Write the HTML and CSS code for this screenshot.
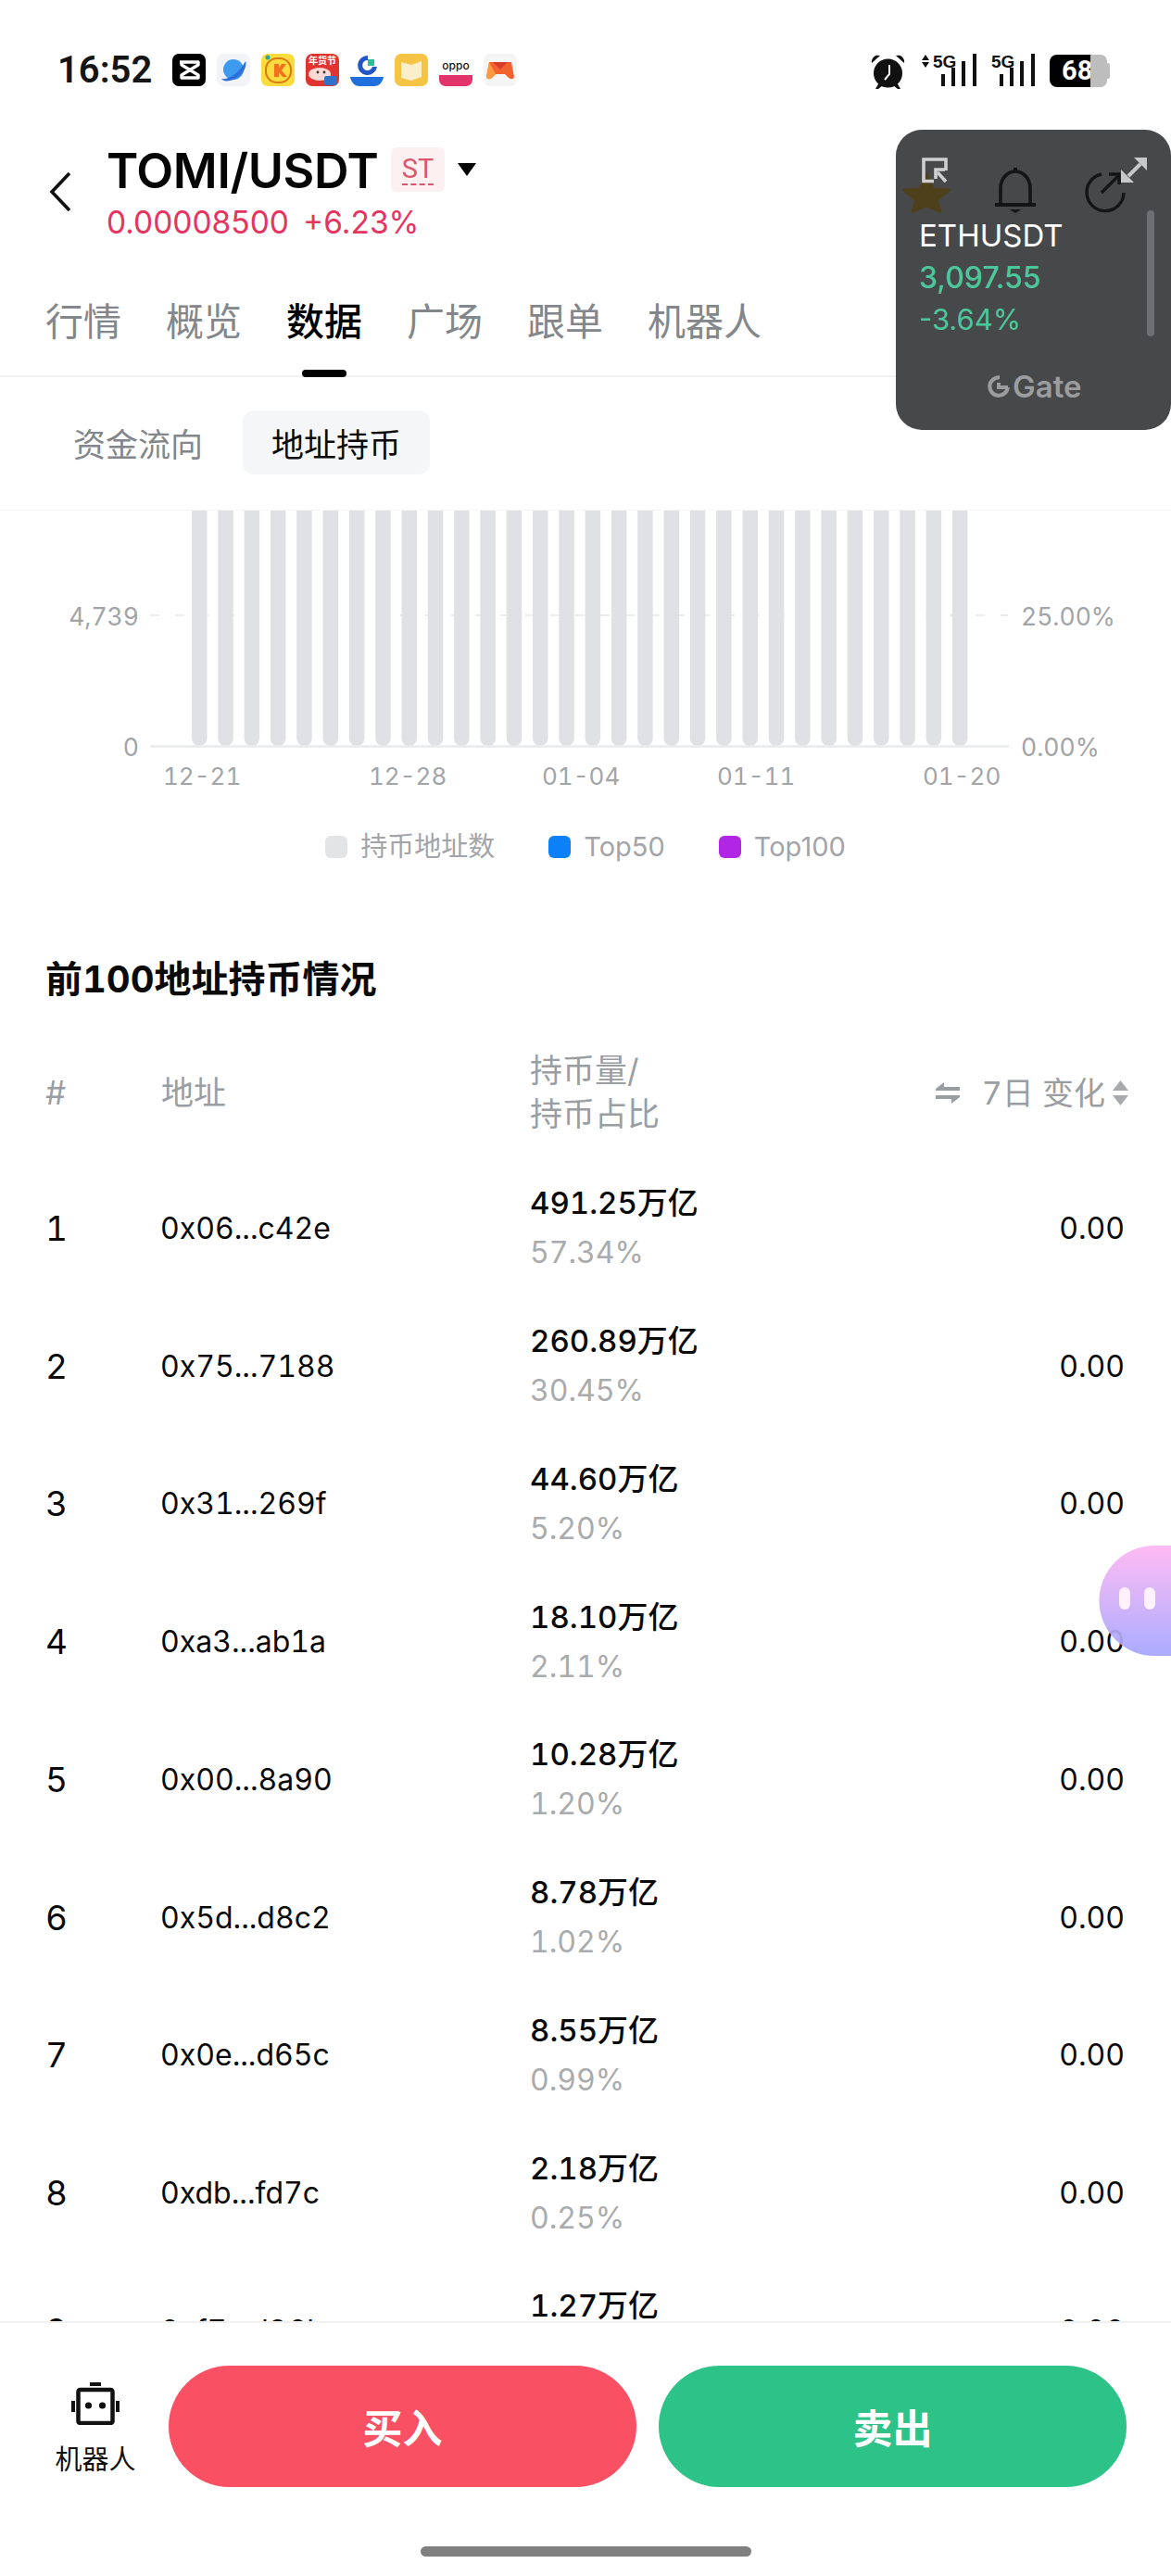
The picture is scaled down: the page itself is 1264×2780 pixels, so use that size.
FILE: index.html
```html
<!DOCTYPE html>
<html lang="zh-CN">
<head>
<meta charset="utf-8">
<title>TOMI/USDT</title>
<link rel="stylesheet" href="styles.css">
</head>
<body>
<div class="app">
  <div class="status">
    <span class="time">16:52</span>
    <div class="apps">
      <svg class="app-ic" viewBox="0 0 36 35"><rect width="36" height="35" rx="7" fill="#000"/><path d="M8 9 L28 9 L28 12 L10 23 L10 26 L28 26 L28 23 L10 12 L10 9" fill="none" stroke="#fff" stroke-width="3.4" stroke-linejoin="round"/></svg>
      <svg class="app-ic" viewBox="0 0 36 35"><rect width="36" height="35" rx="7" fill="#f2f4f7"/><circle cx="18" cy="17" r="11" fill="#3d9bf0"/><path d="M5 27 C12 29 25 20 31 8 C33 14 28 24 18 28 C12 30 7 30 5 27Z" fill="#2f6fdc"/></svg>
      <svg class="app-ic" viewBox="0 0 36 35"><rect width="36" height="35" rx="7" fill="#fbdc3e"/><rect x="5" y="5" width="27" height="26" rx="12" fill="none" stroke="#d97b12" stroke-width="2"/><path d="M14 11 V25 H19 V20 L23 25 H28 L22 18 L27 11 H22 L19 15 V11Z" fill="#f0731c"/><circle cx="7" cy="4" r="2.500" fill="#2aa89a"/></svg>
      <svg class="app-ic" viewBox="0 0 36 35"><rect width="36" height="35" rx="7" fill="#e1332f"/><text class="ic-txt" x="18" y="11" font-size="10" fill="#fff" text-anchor="middle">年货节</text><ellipse cx="15" cy="22" rx="12" ry="7" fill="#fbd9d4"/><circle cx="13" cy="20" r="1.4" fill="#333"/><circle cx="20" cy="20" r="1.4" fill="#333"/><rect x="20" y="24" width="14" height="10" rx="2" fill="#2f73c9"/></svg>
      <svg class="app-ic" viewBox="0 0 36 35"><path d="M19 2 A10.500 10.500 0 1 0 29 14 L24 14 A5.500 5.500 0 1 1 19 7Z" fill="#2355c7"/><rect x="19" y="6" width="7" height="7" fill="#27c29a"/><path d="M0 25 H36 C35 31 31 35 26 35 H10 C5 35 1 31 0 25Z" fill="#1f6fdc"/></svg>
      <svg class="app-ic" viewBox="0 0 36 35"><rect width="36" height="35" rx="7" fill="#f6c445"/><path d="M7 9 L18 12 L29 8 V25 L18 29 L7 26Z" fill="#fbeecb"/></svg>
      <svg class="app-ic" viewBox="0 0 36 35"><text class="ic-lat" x="18" y="17" font-size="12" fill="#111" text-anchor="middle">oppo</text><path d="M0 23 H36 V28 A7 7 0 0 1 29 35 H7 A7 7 0 0 1 0 28Z" fill="#e2336b"/></svg>
      <svg class="app-ic" viewBox="0 0 36 35"><rect width="36" height="35" rx="7" fill="#f5f5f6"/><path d="M6 9 H30 L33 25 Q32 29 27 26 L23 22 H13 L9 26 Q4 29 3 25Z" fill="#f2622e"/><path d="M10 9 L18 17 L26 9Z" fill="#d93c2a"/><path d="M3 25 L6 9 L13 22 L9 26 Q4 29 3 25Z" fill="#fb9a3f"/></svg>
    </div>
    <div class="sys">
      <svg class="sys-alarm" viewBox="0 0 38 38"><circle cx="18.500" cy="21" r="15.500" fill="#111"/><path d="M1 10 A7 7 0 0 1 10 2 Z M36 10 A7 7 0 0 0 27 2 Z" fill="#111"/><path d="M5 38 L9 31 L13 34 L8 38Z M32 38 L28 31 L24 34 L29 38Z" fill="#111"/><path d="M20 12 V22 L15 28" fill="none" stroke="#fff" stroke-width="2"/></svg>
      <svg class="sys-sig1" viewBox="0 0 60 36"><path d="M5 1 L9 7 H1Z M5 15 L9 9 H1Z" fill="#111"/><text class="sig-txt" x="13" y="15" font-size="19">5G</text><rect x="22" y="22" width="4" height="13" fill="#111"/><rect x="33" y="15" width="4" height="20" fill="#111"/><rect x="44" y="8" width="4" height="27" fill="#111"/><rect x="56" y="0" width="4" height="35" fill="#111"/></svg>
      <svg class="sys-sig2" viewBox="0 0 47 36"><text class="sig-txt" x="0" y="15" font-size="19">5G</text><rect x="9" y="22" width="4" height="13" fill="#111"/><rect x="20" y="15" width="4" height="20" fill="#111"/><rect x="31" y="8" width="4" height="27" fill="#111"/><rect x="43" y="0" width="4" height="35" fill="#111"/></svg>
      <div class="battery"><span class="batt-fill">68</span><span class="batt-rest"></span></div>
    </div>
  </div>

  <header class="head">
    <svg class="back" viewBox="0 0 24 44"><path d="M22 2 L3 22 L22 42" fill="none" stroke="#111" stroke-width="3.6"/></svg>
    <div class="pair">
      <div class="pair-top">
        <span class="pair-name">TOMI/USDT</span>
        <span class="badge"><span class="badge-t">ST</span></span>
        <span class="caret"></span>
      </div>
      <div class="pair-price"><span>0.00008500</span><span>+6.23%</span></div>
    </div>
  </header>

  <nav class="tabs">
    <a class="tab">行情</a>
    <a class="tab">概览</a>
    <a class="tab tab-on">数据</a>
    <a class="tab">广场</a>
    <a class="tab">跟单</a>
    <a class="tab">机器人</a>
  </nav>

  <div class="subtabs">
    <a class="sub">资金流向</a>
    <a class="sub sub-on">地址持币</a>
  </div>

  <main class="main">
    <svg class="chart" viewBox="0 0 1264 300" width="1264" height="300">
      <line x1="162" y1="113" x2="1088" y2="113" class="grid"/>
      <rect x="207" y="-20" width="16.5" height="274" rx="8" class="bar"/>
      <rect x="235.3" y="-20" width="16.5" height="274" rx="8" class="bar"/>
      <rect x="263.6" y="-20" width="16.5" height="274" rx="8" class="bar"/>
      <rect x="291.9" y="-20" width="16.5" height="274" rx="8" class="bar"/>
      <rect x="320.2" y="-20" width="16.5" height="274" rx="8" class="bar"/>
      <rect x="348.5" y="-20" width="16.5" height="274" rx="8" class="bar"/>
      <rect x="376.9" y="-20" width="16.5" height="274" rx="8" class="bar"/>
      <rect x="405.2" y="-20" width="16.5" height="274" rx="8" class="bar"/>
      <rect x="433.5" y="-20" width="16.5" height="274" rx="8" class="bar"/>
      <rect x="461.8" y="-20" width="16.5" height="274" rx="8" class="bar"/>
      <rect x="490.1" y="-20" width="16.5" height="274" rx="8" class="bar"/>
      <rect x="518.4" y="-20" width="16.5" height="274" rx="8" class="bar"/>
      <rect x="546.7" y="-20" width="16.5" height="274" rx="8" class="bar"/>
      <rect x="575" y="-20" width="16.5" height="274" rx="8" class="bar"/>
      <rect x="603.3" y="-20" width="16.5" height="274" rx="8" class="bar"/>
      <rect x="631.6" y="-20" width="16.5" height="274" rx="8" class="bar"/>
      <rect x="659.9" y="-20" width="16.5" height="274" rx="8" class="bar"/>
      <rect x="688.2" y="-20" width="16.5" height="274" rx="8" class="bar"/>
      <rect x="716.5" y="-20" width="16.5" height="274" rx="8" class="bar"/>
      <rect x="744.8" y="-20" width="16.5" height="274" rx="8" class="bar"/>
      <rect x="773.1" y="-20" width="16.5" height="274" rx="8" class="bar"/>
      <rect x="801.5" y="-20" width="16.5" height="274" rx="8" class="bar"/>
      <rect x="829.8" y="-20" width="16.5" height="274" rx="8" class="bar"/>
      <rect x="858.1" y="-20" width="16.5" height="274" rx="8" class="bar"/>
      <rect x="886.4" y="-20" width="16.5" height="274" rx="8" class="bar"/>
      <rect x="914.7" y="-20" width="16.5" height="274" rx="8" class="bar"/>
      <rect x="943" y="-20" width="16.5" height="274" rx="8" class="bar"/>
      <rect x="971.3" y="-20" width="16.5" height="274" rx="8" class="bar"/>
      <rect x="999.6" y="-20" width="16.5" height="274" rx="8" class="bar"/>
      <rect x="1027.9" y="-20" width="16.5" height="274" rx="8" class="bar"/>
      <line x1="162" y1="254.5" x2="1089" y2="254.5" class="axis"/>
      <text class="lbl" x="150" y="124" text-anchor="end">4,739</text>
      <text class="lbl" x="150" y="265" text-anchor="end">0</text>
      <text class="lbl" x="1102" y="124">25.00%</text>
      <text class="lbl" x="1102" y="265">0.00%</text>
      <text class="lbl lbl-d" x="176" y="296">12-21</text>
      <text class="lbl lbl-d" x="398" y="296">12-28</text>
      <text class="lbl lbl-d" x="585" y="296">01-04</text>
      <text class="lbl lbl-d" x="774" y="296">01-11</text>
      <text class="lbl lbl-d" x="996" y="296">01-20</text>
    </svg>

    <div class="legend">
      <div class="leg"><i class="sw sw-g"></i>持币地址数</div>
      <div class="leg"><i class="sw sw-b"></i>Top50</div>
      <div class="leg"><i class="sw sw-p"></i>Top100</div>
    </div>

    <h2 class="title">前100地址持币情况</h2>

    <div class="thead">
      <span>#</span>
      <span>地址</span>
      <span class="th-qty">持币量/<br>持币占比</span>
      <span class="th-chg">
        <svg class="swap" viewBox="0 0 26 23"><path d="M0 7 L9 0 V5 H26 V9 H0Z M26 16 L17 23 V18 H0 V14 H26Z" fill="#9a9da1"/></svg>
        <span class="th-txt">7日 变化</span>
        <svg class="sort" viewBox="0 0 17 27"><path d="M8.5 0 L17 11 H0Z" fill="#a8aaad"/><path d="M8.5 27 L0 16 H17Z" fill="#a8aaad"/></svg>
      </span>
    </div>

    <div class="row"><span class="num">1</span><span class="addr">0x06...c42e</span><div class="qty"><b>491.25万亿</b><span>57.34%</span></div><span class="chg">0.00</span></div>
    <div class="row"><span class="num">2</span><span class="addr">0x75...7188</span><div class="qty"><b>260.89万亿</b><span>30.45%</span></div><span class="chg">0.00</span></div>
    <div class="row"><span class="num">3</span><span class="addr">0x31...269f</span><div class="qty"><b>44.60万亿</b><span>5.20%</span></div><span class="chg">0.00</span></div>
    <div class="row"><span class="num">4</span><span class="addr">0xa3...ab1a</span><div class="qty"><b>18.10万亿</b><span>2.11%</span></div><span class="chg">0.00</span></div>
    <div class="row"><span class="num">5</span><span class="addr">0x00...8a90</span><div class="qty"><b>10.28万亿</b><span>1.20%</span></div><span class="chg">0.00</span></div>
    <div class="row"><span class="num">6</span><span class="addr">0x5d...d8c2</span><div class="qty"><b>8.78万亿</b><span>1.02%</span></div><span class="chg">0.00</span></div>
    <div class="row"><span class="num">7</span><span class="addr">0x0e...d65c</span><div class="qty"><b>8.55万亿</b><span>0.99%</span></div><span class="chg">0.00</span></div>
    <div class="row"><span class="num">8</span><span class="addr">0xdb...fd7c</span><div class="qty"><b>2.18万亿</b><span>0.25%</span></div><span class="chg">0.00</span></div>
    <div class="row"><span class="num">9</span><span class="addr">0xf7...d36b</span><div class="qty"><b>1.27万亿</b><span>0.15%</span></div><span class="chg">0.00</span></div>
  </main>

  <footer class="foot">
    <div class="foot-row">
      <div class="bot">
        <svg class="bot-ic" viewBox="0 0 52 46"><rect x="20" y="0" width="12" height="4" fill="#111"/><rect x="7.5" y="8" width="37" height="36" rx="2" fill="none" stroke="#111" stroke-width="4.5"/><rect x="0" y="20" width="4" height="12" fill="#111"/><rect x="48" y="20" width="4" height="12" fill="#111"/><circle cx="18.5" cy="25" r="3.6" fill="#111"/><circle cx="33.5" cy="25" r="3.6" fill="#111"/></svg>
        <span class="bot-txt">机器人</span>
      </div>
      <a class="btn btn-buy">买入</a>
      <a class="btn btn-sell">卖出</a>
    </div>
    <div class="home"></div>
  </footer>

  <aside class="float">
    <svg class="float-ic" viewBox="0 0 297 324" width="297" height="324">
      <path d="M33 48 L40 64 L57 65 L44 76 L48 88 L33 82 L18 88 L22 76 L9 65 L26 64Z" fill="#4e401a" stroke="#4e401a" stroke-width="3" stroke-linejoin="round"/>
      <path d="M41 55.500 H30 V32 H54 V44" fill="none" stroke="#cfcfcf" stroke-width="3.600"/>
      <path d="M54 56 L45 46" stroke="#cfcfcf" stroke-width="3.600"/>
      <path d="M43 53 V43 H53" fill="none" stroke="#cfcfcf" stroke-width="3.600"/>
      <path d="M129 41 V46" stroke="#141516" stroke-width="4"/>
      <path d="M113 81 V63 A16 18 0 0 1 145 63 V81" fill="none" stroke="#141516" stroke-width="3.600"/>
      <path d="M107 81 H151" stroke="#141516" stroke-width="4"/>
      <path d="M123 86 H135 L129 90Z" fill="#141516"/>
      <path d="M222 48 A20 20 0 1 0 246 68" fill="none" stroke="#141516" stroke-width="3.400"/>
      <path d="M222 68 L240 50" stroke="#141516" stroke-width="3.400"/>
      <path d="M230 48 H241 V59" fill="none" stroke="#141516" stroke-width="3.400"/>
      <path d="M251 50 L264 37" stroke="#c8c8c8" stroke-width="4"/>
      <path d="M257 30 H271 V44Z" fill="#c8c8c8"/>
      <path d="M243 43 V57 H257Z" fill="#c8c8c8"/>
    </svg>
    <div class="f-name">ETHUSDT</div>
    <div class="f-price">3,097.55</div>
    <div class="f-pct">-3.64%</div>
    <div class="f-logo">
      <svg class="g-ic" viewBox="0 0 24 24"><path d="M13 2.500 A9.700 9.700 0 1 0 21.700 13" fill="none" stroke="#9b9c9e" stroke-width="4.200"/><path d="M10 8 H14 V11 H22 V15 H10Z" fill="#9b9c9e"/></svg>
      <span>Gate</span>
    </div>
    <span class="f-scroll"></span>
  </aside>

  <svg class="bubble" viewBox="0 0 78 119" width="78" height="119">
    <defs><linearGradient id="bub" x1="0" y1="0" x2="0" y2="1"><stop offset="0" stop-color="#ffb6f3"/><stop offset="1" stop-color="#a4a6ff"/></linearGradient></defs>
    <path d="M78 0 H60 A59.500 59.500 0 0 0 60 119 H78Z" fill="url(#bub)"/>
    <rect x="22" y="45" width="12" height="24" rx="6" fill="#fff0fd"/>
    <rect x="49" y="45" width="12" height="24" rx="6" fill="#fff0fd"/>
  </svg>
</div>
</body>
</html>
```

FILE: styles.css
```css
* { box-sizing: border-box; }
html, body { margin: 0; padding: 0; background: #fff; }
body { font-family: Inter, "Noto Sans CJK SC", sans-serif; color: #000; }
a { display: block; }
svg { display: block; flex: none; }

.app { position: relative; width: 1264px; height: 2780px; overflow: hidden; display: flex; flex-direction: column; background: #fff; }

/* status bar */
.status { height: 153px; flex: none; display: flex; align-items: flex-start; padding: 58px 66px 0 62px; }
.time { font: 600 40px/35px Roboto, sans-serif; color: #151515; width: 99px; }
.apps { display: flex; gap: 12px; margin-left: 25px; }
.app-ic { width: 36px; height: 35px; }
.ic-txt { font-family: "Noto Sans CJK SC", sans-serif; font-weight: 700; }
.ic-lat { font-family: Inter, sans-serif; font-weight: 500; }
.sig-txt { font-family: "Liberation Sans", sans-serif; font-weight: 700; fill: #111; }
.sys { margin-left: auto; display: flex; gap: 16px; align-items: flex-start; }
.sys-alarm { width: 38px; height: 38px; }
.sys-sig1 { width: 60px; height: 36px; }
.sys-sig2 { width: 47px; height: 36px; }
.battery { position: relative; width: 65px; height: 35px; display: flex; margin-top: 1px; }
.batt-fill { width: 44px; background: #000; color: #fff; border-radius: 8px 0 0 8px; font: 700 29px/35px Roboto, sans-serif; padding-left: 13px; white-space: nowrap; }
.batt-rest { width: 18px; background: #bdbdbd; border-radius: 0 7px 7px 0; }
.battery::after { content: ""; position: absolute; right: 0; top: 9px; width: 3px; height: 17px; border-radius: 0 2px 2px 0; background: #bdbdbd; }

/* header */
.head { flex: none; display: flex; align-items: center; height: 107px; padding-left: 53px; gap: 38px; }
.back { width: 24px; height: 44px; }
.pair { display: flex; flex-direction: column; }
.pair-top { display: flex; align-items: center; height: 64px; }
.pair-name { font-weight: 600; font-size: 52px; line-height: 64px; color: #050505; width: 307px; white-space: nowrap; letter-spacing: -.4px; }
.badge { width: 58px; height: 48px; background: #fdf0f0; border-radius: 6px; display: flex; justify-content: center; align-items: center; margin-top: -4px; }
.badge-t { font: 400 29px/31px Roboto, sans-serif; color: #d9566e; border-bottom: 2px dashed #d9566e; }
.caret { width: 0; height: 0; border-left: 10px solid transparent; border-right: 10px solid transparent; border-top: 14px solid #000; margin-left: 14px; margin-top: -4px; }
.pair-price { display: flex; gap: 15px; margin-top: 3px; font-size: 33.5px; line-height: 40px; color: #e5345f; white-space: nowrap; }

/* tabs */
.tabs { flex: none; height: 147px; display: flex; gap: 48px; padding: 60px 0 0 49px; border-bottom: 2px solid #f1f1f2; }
.tab { position: relative; font-size: 41px; line-height: 48px; color: #83878b; font-family: "Noto Sans CJK SC", sans-serif; height: 85px; }
.tab-on { color: #000; font-weight: 500; }
.tab-on::after { content: ""; position: absolute; left: 17px; bottom: -2px; width: 48px; height: 8px; border-radius: 4px; background: #000; }

.subtabs { flex: none; height: 144px; display: flex; gap: 12px; padding: 36px 0 0 48px; border-bottom: 1px solid #f6f6f6; }
.sub { height: 69px; width: 202px; text-align: center; border-radius: 12px; font: 400 35px/69px "Noto Sans CJK SC", sans-serif; color: #83878b; }
.sub-on { background: #f5f6f7; color: #0a0a0a; }

/* main */
.main { flex: 1; min-height: 0; overflow: hidden; }
.chart { width: 1264px; height: 300px; overflow: hidden; }
.bar { fill: #dfe1e4; }
.grid { stroke: #ececee; stroke-width: 2; stroke-dasharray: 10 17; }
.axis { stroke: #e9eaec; stroke-width: 2.500; }
.lbl { font-family: Inter, sans-serif; font-size: 26.5px; fill: #a2a4a8; font-weight: 400; font-variant-numeric: tabular-nums; }
.lbl-d { font-size: 26px; }

.legend { height: 30px; margin-top: 48px; display: flex; justify-content: center; gap: 58px; }
.leg { display: flex; align-items: center; gap: 14px; font-size: 29px; line-height: 30px; color: #a2a4a8; }
.sw { width: 24px; height: 24px; border-radius: 6px; display: block; }
.sw-g { background: #e3e4e6; }
.sw-b { background: #0c80f6; }
.sw-p { background: #b026e4; }

.title { margin: 98px 0 0; padding-left: 49px; font-weight: 700; font-size: 40px; line-height: 60px; font-family: Inter, "Noto Sans CJK SC", sans-serif; color: #0a0a0a; font-variant-numeric: tabular-nums; }

.thead { height: 118px; margin-top: 33px; margin-bottom: 13px; display: grid; grid-template-columns: 125px 398px 1fr auto; align-items: center; padding: 0 46px 0 49px; font-size: 35px; line-height: 47px; color: #9a9da1; }
.th-chg { display: flex; align-items: center; }
.swap { width: 26px; height: 23px; }
.th-txt { margin: 0 8px 0 24px; font-size: 34px; font-variant-numeric: tabular-nums; }
.sort { width: 17px; height: 27px; }

.row { height: 148.75px; display: grid; grid-template-columns: 124px 399px 1fr auto; align-items: center; padding: 0 50px 0 49px; font-variant-numeric: tabular-nums; }
.num { font-size: 37px; color: #0a0a0a; }
.addr { font-size: 32px; color: #0a0a0a; }
.qty { display: flex; flex-direction: column; gap: 10px; }
.qty b { font-weight: 500; font-size: 33px; line-height: 44px; color: #0a0a0a; }
.qty span { font-size: 32px; line-height: 44px; color: #a9abad; }
.chg { font-size: 32px; color: #0a0a0a; }

/* footer */
.foot { flex: none; height: 275px; background: #fff; border-top: 2px solid #f1f1f2; display: flex; flex-direction: column; align-items: center; padding-top: 46px; }
.foot-row { width: 100%; display: flex; gap: 24px; padding-left: 48px; }
.bot { width: 110px; display: flex; flex-direction: column; align-items: center; padding-top: 18px; }
.bot-ic { width: 52px; height: 46px; }
.bot-txt { font-size: 29px; line-height: 36px; margin-top: 20px; color: #111; }
.btn { width: 505px; height: 131px; border-radius: 66px; text-align: center; font: 700 43px/131px "Noto Sans CJK SC", sans-serif; color: #fff; }
.btn-buy { background: #fa5064; }
.btn-sell { background: #2dc287; }
.home { width: 357px; height: 11px; border-radius: 6px; background: #808080; margin-top: 64px; }

/* floating overlays */
.float { position: absolute; left: 967px; top: 140px; width: 297px; height: 324px; border-radius: 28px; background: #47484a; padding: 94px 0 0 25px; display: flex; flex-direction: column; }
.float-ic { position: absolute; left: 0; top: 0; }
.f-name { font-size: 33px; line-height: 40px; color: #fff; }
.f-price { font-size: 32px; line-height: 40px; font-weight: 500; color: #4cc79b; margin-top: 6px; }
.f-pct { font-size: 31px; line-height: 40px; color: #4cc79b; margin-top: 5px; }
.f-logo { position: absolute; left: 99px; top: 264px; display: flex; align-items: center; gap: 3px; font-size: 33px; line-height: 26px; font-weight: 600; color: #9b9c9e; }
.g-ic { width: 24px; height: 24px; }
.f-scroll { position: absolute; left: 271px; top: 87px; width: 8px; height: 136px; border-radius: 4px; background: #6e6f73; }
.bubble { position: absolute; left: 1186px; top: 1668px; opacity: .92; }
```
